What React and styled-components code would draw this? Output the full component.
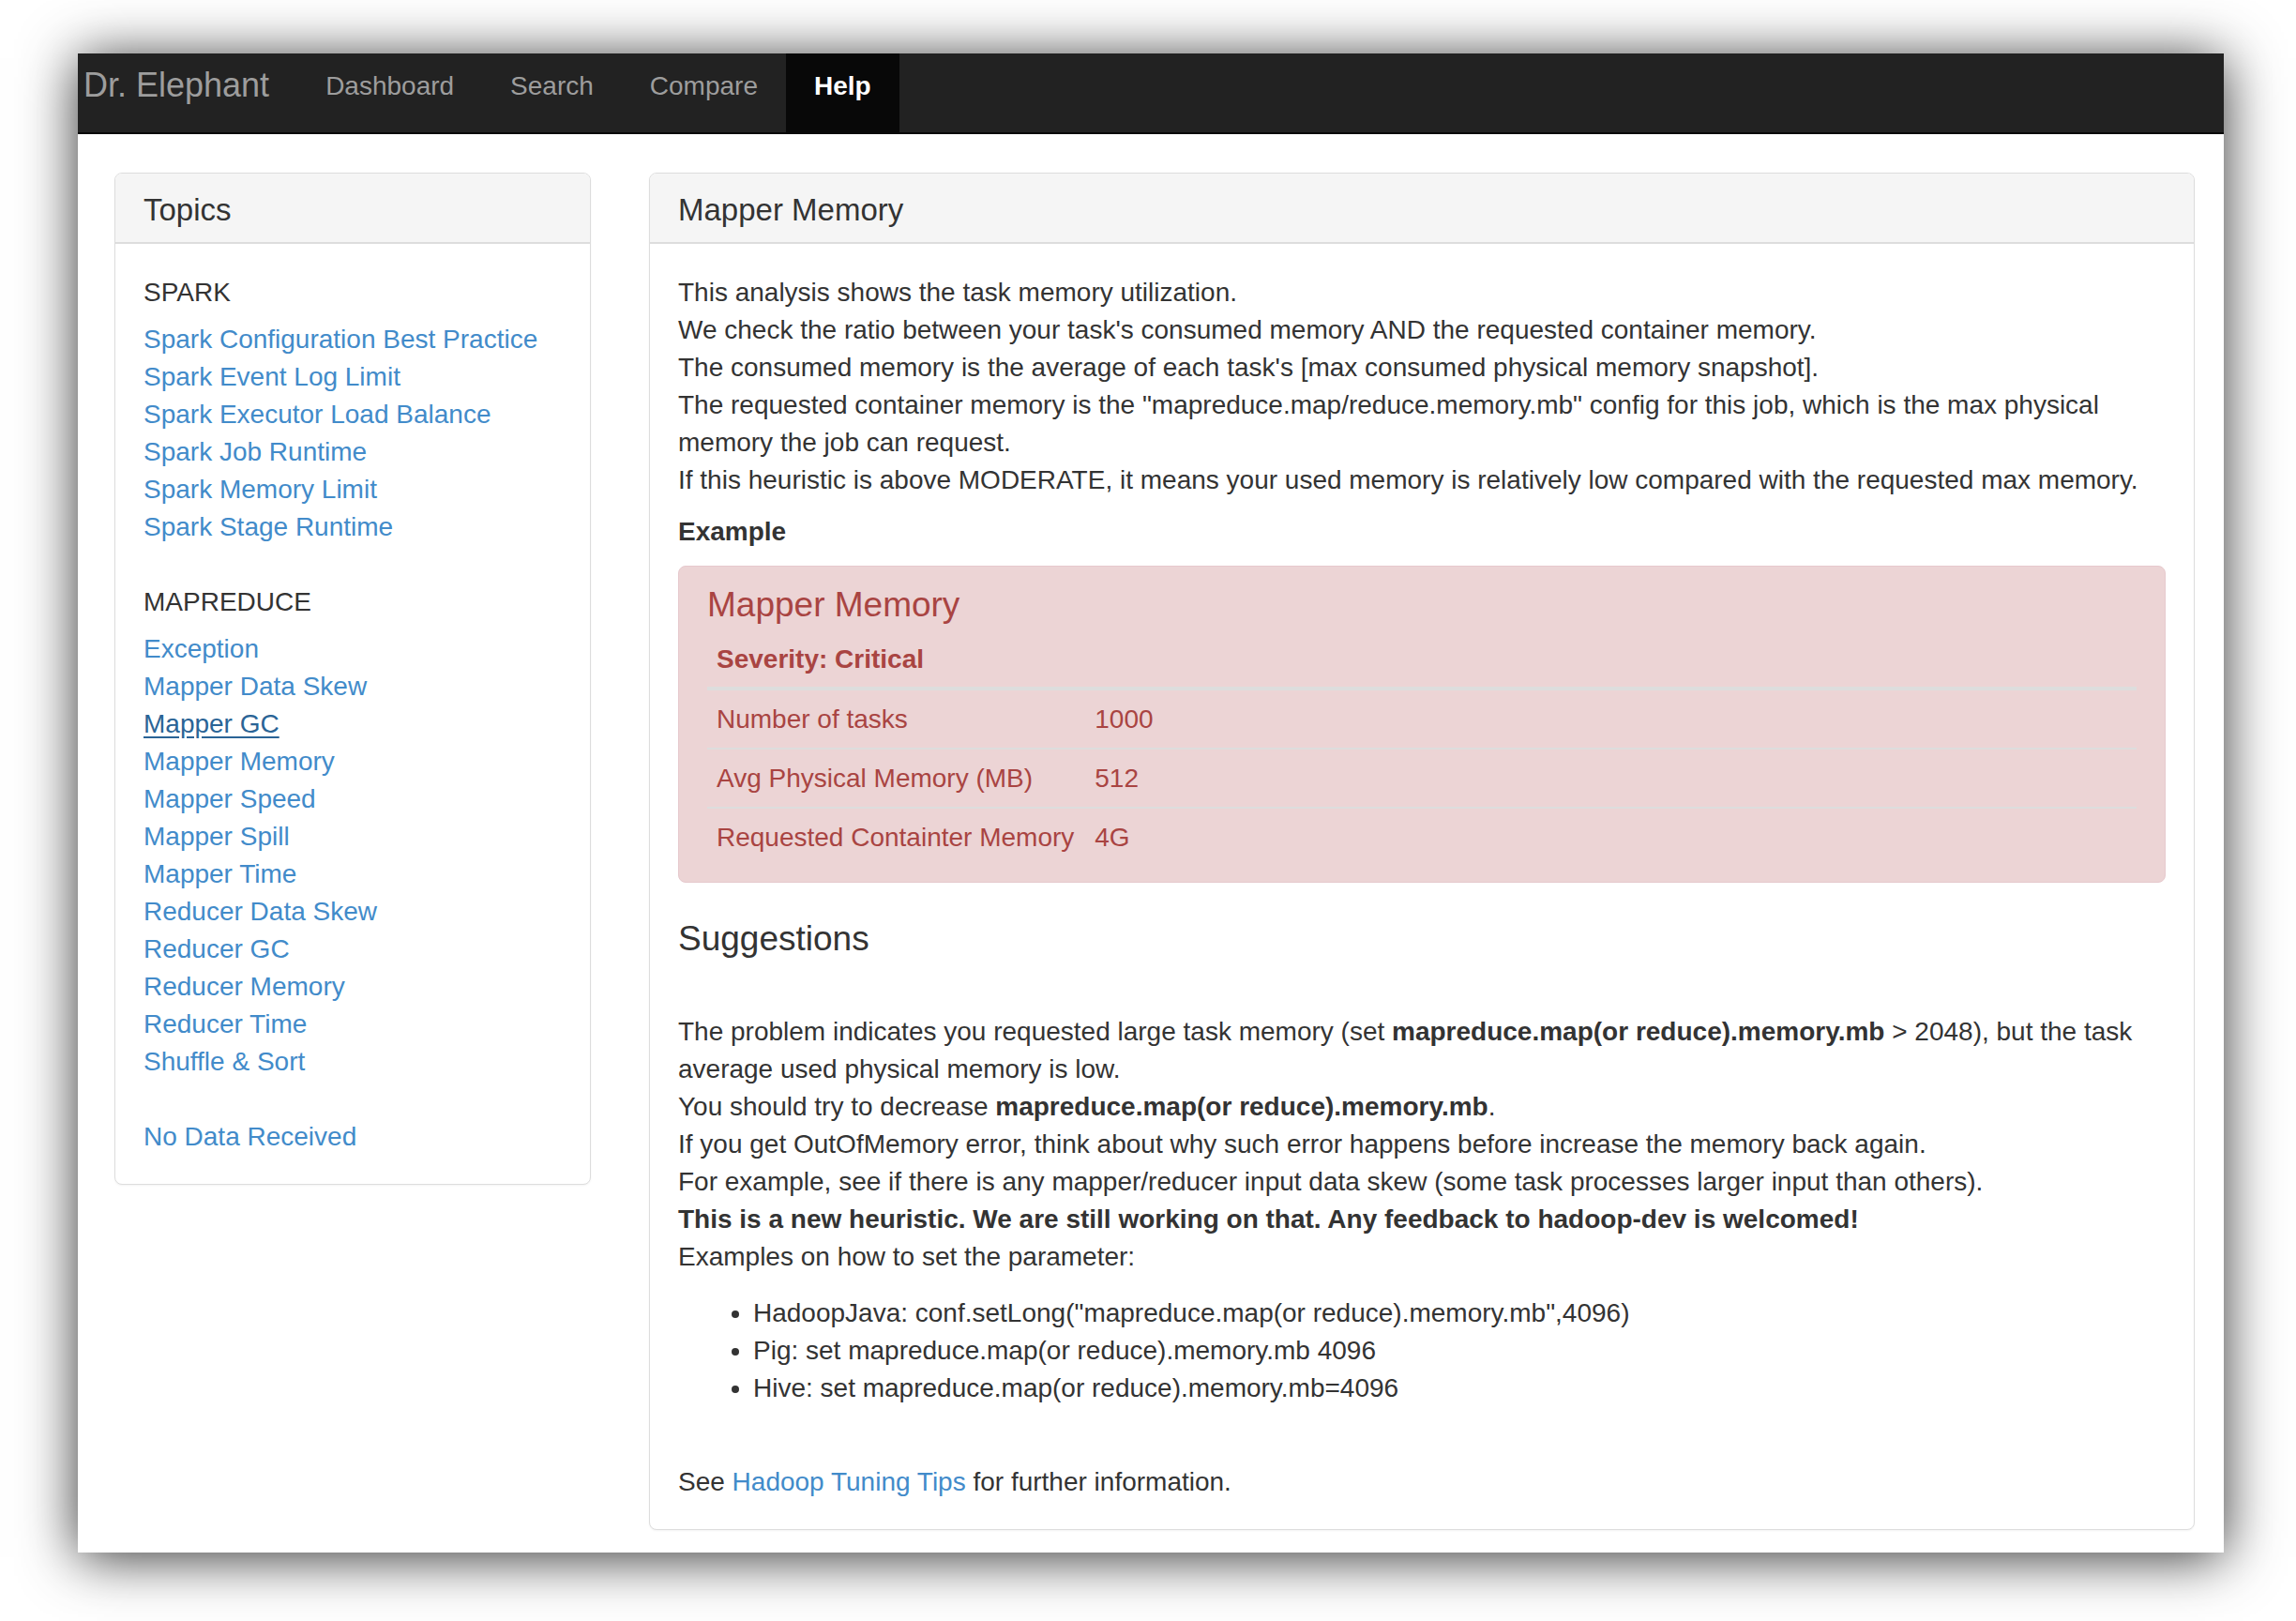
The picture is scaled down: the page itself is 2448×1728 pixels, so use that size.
import React from 'react';
import styled, { createGlobalStyle } from 'styled-components';

const GlobalStyle = createGlobalStyle`
  * { box-sizing: border-box; }
  html, body {
    margin: 0;
    padding: 0;
    background: #fff;
  }
  body {
    width: 2448px;
    height: 1728px;
    overflow: hidden;
    font-family: "Liberation Sans", Arial, Helvetica, sans-serif;
    color: #333;
  }
`;

const Desk = styled.div`
  padding: 57px 0 0 83px;
`;

const Window = styled.div`
  width: 2288px;
  height: 1598px;
  background: #fff;
  box-shadow: 0 5px 56px rgba(0, 0, 0, 0.8);
  overflow: hidden;
  display: flex;
  flex-direction: column;
`;

const Navbar = styled.nav`
  height: 86px;
  flex: none;
  display: flex;
  align-items: stretch;
  background: #222;
  border-bottom: 2px solid #080808;
`;

const Brand = styled.a`
  display: flex;
  align-items: center;
  padding: 0 30px 16px 6px;
  font-size: 36px;
  color: #9d9d9d;
  text-decoration: none;
`;

const NavLink = styled.a`
  display: flex;
  align-items: center;
  padding: 0 30px 14px;
  font-size: 28px;
  text-decoration: none;
  color: ${p => (p.$active ? '#fff' : '#9d9d9d')};
  background: ${p => (p.$active ? '#080808' : 'transparent')};
  font-weight: ${p => (p.$active ? 700 : 400)};
`;

const Page = styled.div`
  display: grid;
  grid-template-columns: 508px 1fr;
  gap: 62px;
  align-items: start;
  padding: 41px 31px 0 39px;
`;

const Panel = styled.section`
  border: 1px solid #ddd;
  border-radius: 8px;
  background: #fff;
  box-shadow: 0 1px 2px rgba(0, 0, 0, 0.05);
  overflow: hidden;
`;

const PanelHeading = styled.div`
  background: #f5f5f5;
  border-bottom: 2px solid #ddd;
  padding: 21px 30px 17px;
`;

const PanelTitle = styled.h3`
  margin: 0;
  font-size: 33px;
  line-height: 35px;
  font-weight: 400;
  color: #333;
`;

const PanelBody = styled.div`
  padding: 32px 30px 30px;
  font-size: 28px;
  line-height: 40px;
`;

const TopicGroup = styled.div`
  & + & {
    margin-top: 40px;
  }
`;

const GroupLabel = styled.div`
  margin-bottom: 10px;
  color: #333;
`;

const TopicLink = styled.a`
  display: block;
  color: ${p => (p.$current ? '#2a6496' : '#428bca')};
  text-decoration: ${p => (p.$current ? 'underline' : 'none')};
  text-underline-offset: 4px;
  width: fit-content;
`;

const Para = styled.p`
  margin: 0 0 20px;
  white-space: nowrap;
`;

const Code = styled.strong`
  font-weight: 700;
`;

const Subhead = styled.h5`
  margin: 20px 0;
  font-size: 28px;
  line-height: 1.1;
  font-weight: 700;
`;

const Alert = styled.div`
  margin-bottom: 40px;
  padding: 21px 30px 17px;
  background: #ecd4d5;
  border: 1px solid #e6c9cd;
  border-radius: 8px;
  color: #a94442;
`;

const AlertTitle = styled.h4`
  margin: 0 0 8px;
  font-size: 37px;
  line-height: 40px;
  font-weight: 400;
  color: inherit;
`;

const DataTable = styled.table`
  width: 100%;
  border-collapse: collapse;
  color: inherit;
`;

const HeadCell = styled.th`
  text-align: left;
  font-weight: 700;
  padding: 10px 12px 9px 10px;
  border-bottom: 4px solid #ddd;
`;

const Row = styled.tr`
  &:not(:last-child) > td {
    border-bottom: 2px solid #ddd;
  }
`;

const Cell = styled.td`
  padding: 11px 12px 10px 10px;
  white-space: nowrap;
  width: ${p => (p.$label ? '1px' : 'auto')};
`;

const SectionTitle = styled.h4`
  margin: 0 0 59px;
  font-size: 37px;
  line-height: 40px;
  font-weight: 400;
`;

const ExampleList = styled.ul`
  margin: 0;
  padding-left: 80px;
  white-space: nowrap;
`;

const SeeAlso = styled.p`
  margin: 60px 0 0;
`;

const InlineLink = styled.a`
  color: #428bca;
  text-decoration: none;
`;

const sparkTopics = [
  'Spark Configuration Best Practice',
  'Spark Event Log Limit',
  'Spark Executor Load Balance',
  'Spark Job Runtime',
  'Spark Memory Limit',
  'Spark Stage Runtime',
];

const mapreduceTopics = [
  'Exception',
  'Mapper Data Skew',
  'Mapper GC',
  'Mapper Memory',
  'Mapper Speed',
  'Mapper Spill',
  'Mapper Time',
  'Reducer Data Skew',
  'Reducer GC',
  'Reducer Memory',
  'Reducer Time',
  'Shuffle & Sort',
];

const metrics = [
  ['Number of tasks', '1000'],
  ['Avg Physical Memory (MB)', '512'],
  ['Requested Containter Memory', '4G'],
];

const examples = [
  'HadoopJava: conf.setLong("mapreduce.map(or reduce).memory.mb",4096)',
  'Pig: set mapreduce.map(or reduce).memory.mb 4096',
  'Hive: set mapreduce.map(or reduce).memory.mb=4096',
];

const Topics = () => (
  <Panel>
    <PanelHeading>
      <PanelTitle>Topics</PanelTitle>
    </PanelHeading>
    <PanelBody>
      <TopicGroup>
        <GroupLabel>SPARK</GroupLabel>
        {sparkTopics.map(t => <TopicLink key={t} href="#">{t}</TopicLink>)}
      </TopicGroup>
      <TopicGroup>
        <GroupLabel>MAPREDUCE</GroupLabel>
        {mapreduceTopics.map(t => (
          <TopicLink key={t} href="#" $current={t === 'Mapper GC'}>{t}</TopicLink>
        ))}
      </TopicGroup>
      <TopicGroup>
        <TopicLink href="#">No Data Received</TopicLink>
      </TopicGroup>
    </PanelBody>
  </Panel>
);

const HelpContent = () => (
  <Panel>
    <PanelHeading>
      <PanelTitle>Mapper Memory</PanelTitle>
    </PanelHeading>
    <PanelBody>
      <Para>
        This analysis shows the task memory utilization.<br />
        We check the ratio between your task's consumed memory AND the requested container memory.<br />
        The consumed memory is the average of each task's [max consumed physical memory snapshot].<br />
        The requested container memory is the "mapreduce.map/reduce.memory.mb" config for this job, which is the max physical<br />
        memory the job can request.<br />
        If this heuristic is above MODERATE, it means your used memory is relatively low compared with the requested max memory.
      </Para>
      <Subhead>Example</Subhead>
      <Alert>
        <AlertTitle>Mapper Memory</AlertTitle>
        <DataTable>
          <thead>
            <tr>
              <HeadCell colSpan={2}>Severity: Critical</HeadCell>
            </tr>
          </thead>
          <tbody>
            {metrics.map(([label, value]) => (
              <Row key={label}>
                <Cell $label>{label}</Cell>
                <Cell>{value}</Cell>
              </Row>
            ))}
          </tbody>
        </DataTable>
      </Alert>
      <SectionTitle>Suggestions</SectionTitle>
      <Para>
        The problem indicates you requested large task memory (set <Code>mapreduce.map(or reduce).memory.mb</Code> &gt; 2048), but the task<br />
        average used physical memory is low.<br />
        You should try to decrease <Code>mapreduce.map(or reduce).memory.mb</Code>.<br />
        If you get OutOfMemory error, think about why such error happens before increase the memory back again.<br />
        For example, see if there is any mapper/reducer input data skew (some task processes larger input than others).<br />
        <Code>This is a new heuristic. We are still working on that. Any feedback to hadoop-dev is welcomed!</Code><br />
        Examples on how to set the parameter:
      </Para>
      <ExampleList>
        {examples.map(e => <li key={e}>{e}</li>)}
      </ExampleList>
      <SeeAlso>
        See <InlineLink href="#">Hadoop Tuning Tips</InlineLink> for further information.
      </SeeAlso>
    </PanelBody>
  </Panel>
);

export default function App() {
  return (
    <>
      <GlobalStyle />
      <Desk>
        <Window>
          <Navbar>
            <Brand href="#">Dr. Elephant</Brand>
            <NavLink href="#">Dashboard</NavLink>
            <NavLink href="#">Search</NavLink>
            <NavLink href="#">Compare</NavLink>
            <NavLink href="#" $active>Help</NavLink>
          </Navbar>
          <Page>
            <Topics />
            <HelpContent />
          </Page>
        </Window>
      </Desk>
    </>
  );
}
